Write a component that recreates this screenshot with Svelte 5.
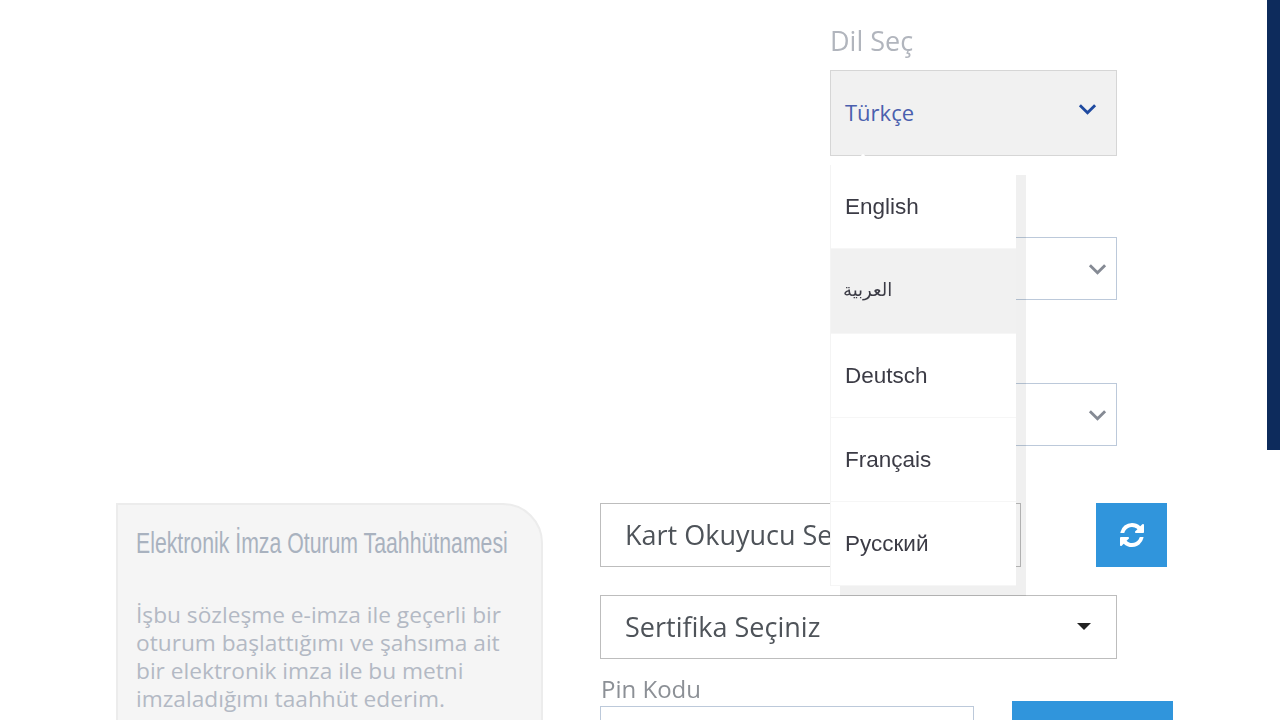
<script lang="ts">
	const Languages = [
		{ Label: 'English' },
		{ Label: 'العربية', Arabic: true, Active: true },
		{ Label: 'Deutsch' },
		{ Label: 'Français' },
		{ Label: 'Русский' }
	];
</script>

<div class="page">
	<div class="side-strip"></div>

	<div class="top">
		<div class="settings">
			<div class="field-label">Dil Seç</div>
			<div class="lang-select">
				<span>Türkçe</span>
				<svg class="chevron" viewBox="0 0 20 12" width="19" height="12">
					<path d="M2 2l8 8 8-8" fill="none" stroke="#1f4aa0" stroke-width="3" />
				</svg>
				<div class="lang-menu">
					<div class="menu-arrow"></div>
					{#each Languages as Lang}
						<div class="lang-item" class:active={Lang.Active} class:arabic={Lang.Arabic}>{Lang.Label}</div>
					{/each}
				</div>
			</div>
			<div class="plain-select first">
				<svg class="chevron" viewBox="0 0 20 12" width="19" height="12">
					<path d="M2 2l8 8 8-8" fill="none" stroke="#858a94" stroke-width="3" />
				</svg>
			</div>
			<div class="plain-select second">
				<svg class="chevron" viewBox="0 0 20 12" width="19" height="12">
					<path d="M2 2l8 8 8-8" fill="none" stroke="#858a94" stroke-width="3" />
				</svg>
			</div>
		</div>
	</div>

	<div class="bottom">
		<div class="commit-card">
			<h3>Elektronik İmza Oturum Taahhütnamesi</h3>
			<p>İşbu sözleşme e-imza ile geçerli bir oturum başlattığımı ve şahsıma ait bir elektronik imza ile bu metni imzaladığımı taahhüt ederim.</p>
		</div>

		<div class="login-form">
			<div class="reader-row">
				<div class="box reader">Kart Okuyucu Seçiniz</div>
				<button class="refresh" aria-label="Yenile">
					<svg viewBox="0 0 1792 1792" width="28" height="28">
						<path fill="#fff" d="M1639 1056q0 5-1 7-64 268-268 434.5t-478 166.5q-146 0-282.5-55t-243.5-157l-129 129q-19 19-45 19t-45-19-19-45v-448q0-26 19-45t45-19h448q26 0 45 19t19 45-19 45l-137 137q71 66 161 102t187 36q134 0 250-65t186-179q11-17 53-117 8-23 30-23h192q13 0 22.5 9.5t9.5 22.5zm25-800v448q0 26-19 45t-45 19h-448q-26 0-45-19t-19-45 19-45l138-138q-148-137-349-137-134 0-250 65t-186 179q-11 17-53 117-8 23-30 23h-199q-13 0-22.5-9.5t-9.5-22.5v-7q65-268 270-434.5t480-166.5q146 0 284 55.5t245 156.5l130-129q19-19 45-19t45 19 19 45z" />
					</svg>
				</button>
			</div>
			<div class="box cert">
				<span>Sertifika Seçiniz</span>
				<span class="caret"></span>
			</div>
			<div class="pin-row">
				<div class="pin-field">
					<label for="pin">Pin Kodu</label>
					<input id="pin" type="password" />
				</div>
				<button class="submit" aria-label="Giriş"></button>
			</div>
		</div>
	</div>
</div>

<style>
	:global(body) {
		margin: 0;
		background: #fff;
	}

	.page {
		position: relative;
		height: 720px;
		overflow: hidden;
		font-family: 'Open Sans', sans-serif;
		filter: blur(0.5px);
	}

	.side-strip {
		position: absolute;
		top: 0;
		right: 0;
		width: 13px;
		height: 450px;
		background: #0d2b5c;
	}

	.top {
		display: flex;
		justify-content: flex-start;
		padding-left: 830px;
		padding-top: 24px;
		height: 479px;
	}

	.settings {
		width: 287px;
	}

	.field-label {
		font-size: 27px;
		line-height: 34px;
		color: #b1b5bd;
		margin-bottom: 12px;
	}

	.lang-select {
		position: relative;
		display: flex;
		align-items: center;
		justify-content: space-between;
		box-sizing: border-box;
		height: 86px;
		padding: 0 19px 2px 14px;
		background: #f1f1f1;
		border: 1px solid #d6d6d6;
		font-size: 22px;
		color: #4a5fae;
	}

	.lang-select .chevron {
		margin-bottom: 6px;
	}

	.lang-menu {
		position: absolute;
		top: 94px;
		left: -1px;
		box-sizing: border-box;
		width: 186px;
		background: #fff;
		border-left: 1px solid #f4f4f4;
		box-shadow: 10px 10px 0 rgba(0, 0, 0, 0.06);
		z-index: 5;
	}

	.menu-arrow {
		position: absolute;
		top: -8px;
		left: 24px;
		width: 16px;
		height: 16px;
		background: #fff;
		transform: rotate(45deg);
	}

	.lang-item {
		position: relative;
		box-sizing: border-box;
		height: 84px;
		padding: 0 14px;
		display: flex;
		align-items: center;
		font-family: 'Liberation Sans', Arial, sans-serif;
		font-size: 22.5px;
		color: #3b3b45;
		border-bottom: 1px solid #f6f6f6;
	}

	.lang-item.active {
		height: 85px;
		background: #f1f1f1;
	}

	.lang-item.arabic {
		font-family: 'DejaVu Sans', sans-serif;
		font-size: 18px;
		padding: 0 12px 4px;
	}

	.plain-select {
		display: flex;
		align-items: center;
		justify-content: flex-end;
		box-sizing: border-box;
		height: 63px;
		padding-right: 9px;
		border: 1px solid #bcc9da;
	}

	.plain-select.first {
		margin-top: 81px;
	}

	.plain-select.second {
		margin-top: 83px;
	}

	.bottom {
		display: flex;
		align-items: flex-start;
		padding-left: 116px;
	}

	.commit-card {
		box-sizing: border-box;
		width: 427px;
		height: 260px;
		margin-right: 57px;
		padding: 18px 18px;
		background: #f5f5f5;
		border: 2px solid #ececec;
		border-top-right-radius: 40px;
		color: #b3b9c4;
	}

	/* no condensed family installed, so squeeze the sans */
	.commit-card h3 {
		margin: 0 0 38px;
		width: 506px;
		white-space: nowrap;
		font-family: 'Liberation Sans', sans-serif;
		font-size: 29px;
		line-height: 40px;
		font-weight: 400;
		color: #a9b2bf;
		transform: scaleX(0.733);
		transform-origin: left center;
	}

	.commit-card p {
		margin: 0;
		font-size: 22.7px;
		line-height: 28px;
		width: 385px;
	}

	.login-form {
		width: 573px;
	}

	.box {
		box-sizing: border-box;
		display: flex;
		align-items: center;
		justify-content: space-between;
		height: 64px;
		padding: 0 24px 2px;
		border: 1px solid #bdbdbd;
		font-size: 27px;
		color: #4e5359;
	}

	.reader-row {
		display: flex;
		justify-content: space-between;
		width: 567px;
		margin-bottom: 28px;
	}

	.reader {
		width: 421px;
		white-space: nowrap;
		overflow: hidden;
	}

	.refresh {
		display: flex;
		align-items: center;
		justify-content: center;
		width: 71px;
		height: 64px;
		padding: 0;
		border: 0;
		background: #3095dc;
	}

	.cert {
		width: 517px;
	}

	.caret {
		width: 0;
		height: 0;
		margin-right: 1px;
		border-left: 7px solid transparent;
		border-right: 7px solid transparent;
		border-top: 7px solid #222;
	}

	.pin-row {
		display: flex;
		justify-content: space-between;
		align-items: flex-start;
		margin-top: 14px;
		width: 573px;
	}

	.pin-field label {
		display: block;
		font-size: 24px;
		line-height: 32px;
		margin-bottom: 1px;
		color: #8c9096;
		padding-left: 1px;
	}

	.pin-field input {
		display: block;
		box-sizing: border-box;
		width: 374px;
		height: 60px;
		border: 1px solid #bcc9da;
		outline: none;
	}

	.submit {
		width: 161px;
		height: 60px;
		margin-top: 28px;
		border: 0;
		background: #3095dc;
	}
</style>
